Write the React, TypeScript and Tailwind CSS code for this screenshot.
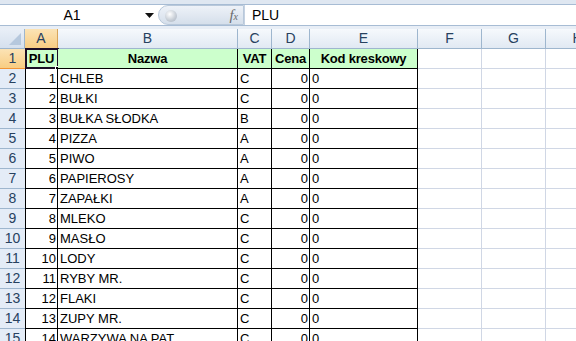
import React from "react";

// Column definitions for the sheet
interface Col {
  key: string;
  w: string;
  table: boolean;
}

const cols: Col[] = [
  { key: "A", w: "w-[33px]", table: true },
  { key: "B", w: "w-[180px]", table: true },
  { key: "C", w: "w-[34px]", table: true },
  { key: "D", w: "w-[38px]", table: true },
  { key: "E", w: "w-[108px]", table: true },
  { key: "F", w: "w-[64px]", table: false },
  { key: "G", w: "w-[64px]", table: false },
  { key: "H", w: "w-[64px]", table: false },
];

const items: [string, string][] = [
  ["CHLEB", "C"],
  ["BUŁKI", "C"],
  ["BUŁKA SŁODKA", "B"],
  ["PIZZA", "A"],
  ["PIWO", "A"],
  ["PAPIEROSY", "A"],
  ["ZAPAŁKI", "A"],
  ["MLEKO", "C"],
  ["MASŁO", "C"],
  ["LODY", "C"],
  ["RYBY MR.", "C"],
  ["FLAKI", "C"],
  ["ZUPY MR.", "C"],
  ["WARZYWA NA PAT.", "C"],
];

const font = { fontFamily: '"Liberation Sans", Arial, sans-serif' };

function FormulaBar() {
  return (
    <div className="flex h-[22px] items-stretch border-y border-[#a7bcd4] bg-white">
      {/* Name box */}
      <div className="relative flex w-[158px] items-center justify-center text-[14px] text-black">
        <span className="mr-[14px]">A1</span>
        <svg className="absolute left-[145px] top-[8px]" width="9" height="5" viewBox="0 0 9 5">
          <path d="M0 0 H9 L4.5 5 Z" fill="#111" />
        </svg>
      </div>
      {/* pill with fx */}
      <div className="relative flex w-[86px] items-center justify-end rounded-l-full border border-[#b8c8da] bg-gradient-to-b from-[#eef2f8] to-[#d5dfeb] pr-[5px]">
        <div className="absolute left-[6px] top-[4px] h-[12px] w-[12px] rounded-full bg-[radial-gradient(circle_at_40%_35%,#ffffff,#c4cbd4_60%,#a9b3bf)]" />
        <span
          className="text-[15px] italic text-[#6b6b6b]"
          style={{ fontFamily: '"Liberation Serif", "Times New Roman", serif' }}
        >
          f<span className="text-[10px]">x</span>
        </span>
      </div>
      <div className="w-[1px] bg-[#c5d2e2]" />
      <div className="flex items-center pl-[7px] text-[14px] text-black">PLU</div>
    </div>
  );
}

function HeaderRow() {
  return (
    <div className="flex h-[20px]">
      <div className="relative w-[25px] shrink-0 border-r border-b border-[#9eb6ce] bg-gradient-to-b from-[#e9eff7] to-[#d5e0ee]">
        <svg className="absolute right-[3px] bottom-[3px]" width="12" height="12" viewBox="0 0 12 12">
          <path d="M12 0 V12 H0 Z" fill="#b6c8dd" />
        </svg>
      </div>
      {cols.map((c) => (
        <div
          key={c.key}
          className={
            c.key === "A"
              ? `${c.w} shrink-0 flex items-center justify-center border-r border-b border-r-[#d7a45a] border-b-[#f29536] bg-gradient-to-b from-[#fbe3b5] to-[#f8cd82] text-[14px] text-[#27415f]`
              : `${c.w} shrink-0 flex items-center justify-center border-r border-b border-[#9eb6ce] bg-gradient-to-b from-[#f6f9fc] to-[#e1e9f3] text-[14px] text-[#27415f]`
          }
        >
          {c.key}
        </div>
      ))}
    </div>
  );
}

function cellText(r: number, key: string): { text: string; right: boolean; bold: boolean } {
  if (r === 1) {
    const head: Record<string, string> = { A: "PLU", B: "Nazwa", C: "VAT", D: "Cena", E: "Kod kreskowy" };
    return { text: head[key] ?? "", right: false, bold: true };
  }
  const it = items[r - 2];
  if (!it) return { text: "", right: false, bold: false };
  switch (key) {
    case "A":
      return { text: String(r - 1), right: true, bold: false };
    case "B":
      return { text: it[0], right: false, bold: false };
    case "C":
      return { text: it[1], right: false, bold: false };
    case "D":
      return { text: "0", right: true, bold: false };
    case "E":
      return { text: "0", right: false, bold: false };
    default:
      return { text: "", right: false, bold: false };
  }
}

function DataRow({ r }: { r: number }) {
  const sel = r === 1;
  return (
    <div className="flex h-[20px]">
      <div
        className={
          sel
            ? "w-[25px] shrink-0 flex items-center justify-center border-b border-[#f29536] bg-gradient-to-b from-[#fbe3b5] to-[#f8cd82] text-[14px] text-[#27415f]"
            : "w-[25px] shrink-0 flex items-center justify-center border-b border-[#9eb6ce] bg-[#e4ecf7] text-[14px] text-[#27415f]"
        }
      >
        {r}
      </div>
      {cols.map((c) => {
        const t = cellText(r, c.key);
        const base = c.table
          ? `border-r border-b border-black ${c.key === "A" ? "border-l" : ""}`
          : "border-r border-b border-[#d0d7e5]";
        const bg = sel && c.table ? "bg-[#ccffcc]" : "bg-white";
        const align = sel
          ? "justify-center"
          : t.right
          ? "justify-end pr-[1px]"
          : "justify-start pl-[2px]";
        return (
          <div
            key={c.key}
            className={`${c.w} relative shrink-0 flex items-center ${base} ${bg} ${align} ${
              t.bold ? "font-bold text-[13px] tracking-[-0.2px]" : "text-[13px]"
            } whitespace-nowrap text-black`}
          >
            {t.text}
            {sel && c.key === "A" && (
              <>
                <div className="pointer-events-none absolute -left-[1px] -top-[1px] h-[21px] w-[34px] border-2 border-[#1b0d25]" />
                <div className="absolute -bottom-[3px] -right-[3px] h-[5px] w-[5px] border border-white bg-black" />
              </>
            )}
          </div>
        );
      })}
    </div>
  );
}

export default function App() {
  return (
    <div className="h-[341px] w-[576px] overflow-hidden bg-white" style={font}>
      <div className="h-[4px] bg-[#dfe7f1]" />
      <FormulaBar />
      <div className="h-[3px] bg-[#e8eef6]" />
      <HeaderRow />
      {Array.from({ length: 15 }, (_, i) => (
        <DataRow key={i} r={i + 1} />
      ))}
    </div>
  );
}
